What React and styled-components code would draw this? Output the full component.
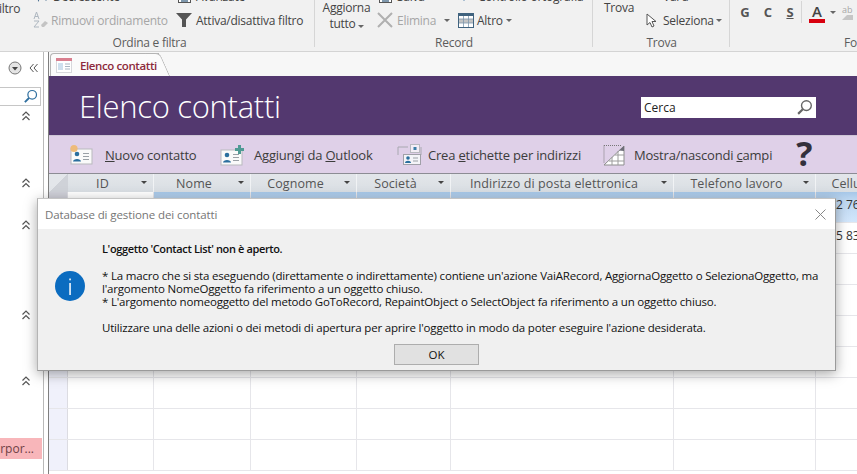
import styled, { createGlobalStyle } from "styled-components";

const Global = createGlobalStyle`
  html, body { margin: 0; padding: 0; background: #fff; }
  body { font-family: "Open Sans", "Liberation Sans", sans-serif; }
`;

const Page = styled.div`
  position: relative;
  width: 857px;
  height: 474px;
  overflow: hidden;
  display: flex;
  flex-direction: column;
  background: #fff;
`;

/* ribbon */
const Ribbon = styled.div`
  display: flex;
  flex: none;
  height: 51px;
  background: #f1f1f1;
  border-bottom: 1px solid #d4d4d4;
  overflow: hidden;
  color: #444;
  font-size: 12px;
  letter-spacing: -0.25px;
  white-space: nowrap;
`;

const Group = styled.div`
  flex: none;
  box-sizing: border-box;
  width: ${(p) => p.$w}px;
  display: grid;
  grid-template-columns: minmax(0, 1fr);
  grid-template-rows: 34px 17px;
  position: relative;
  &::after {
    content: "";
    position: absolute;
    right: 0;
    top: 0;
    bottom: 4px;
    width: 1px;
    background: ${(p) => (p.$last ? "transparent" : "#d6d6d6")};
  }
`;

const GroupBody = styled.div`
  display: flex;
  height: 34px;
  min-width: 0;
  padding: ${(p) => p.$pad || "0"};
`;

const GroupLabel = styled.div`
  line-height: 17px;
  color: #5c5c5c;
  text-align: ${(p) => (p.$left ? "left" : "center")};
  padding-left: ${(p) => p.$left || 0}px;
  padding-right: ${(p) => p.$right || 0}px;
`;

const BigButton = styled.div`
  flex: none;
  width: ${(p) => p.$w}px;
  margin-left: ${(p) => p.$ml || 0}px;
  margin-top: ${(p) => p.$top || 0}px;
  line-height: 16px;
  text-align: ${(p) => p.$align || "center"};
`;

const SmallCol = styled.div`
  flex: none;
  width: ${(p) => p.$w}px;
  margin-left: ${(p) => p.$ml || 0}px;
  height: 31px;
  display: flex;
  flex-direction: column;
  justify-content: flex-end;
  gap: 2px;
`;

const SmallBtn = styled.div`
  flex: none;
  height: 22px;
  display: flex;
  align-items: center;
  gap: ${(p) => p.$gap ?? 4}px;
  color: ${(p) => (p.$off ? "#a6a6a6" : "#444")};
`;

const Caret = styled.span`
  display: inline-block;
  width: 0;
  height: 0;
  border-left: 3px solid transparent;
  border-right: 3px solid transparent;
  border-top: 3px solid #666;
  margin-left: ${(p) => p.$ml ?? 2}px;
  margin-top: 1px;
`;

const FontTools = styled.div`
  display: flex;
  align-items: center;
  height: 24px;
  letter-spacing: 0;
  padding-left: 9px;
`;

const FontLetter = styled.span`
  width: ${(p) => p.$w}px;
  text-align: center;
  font-weight: 700;
  font-size: 13px;
  color: #555;
  text-decoration: ${(p) => (p.$under ? "underline" : "none")};
`;

const ToolDivider = styled.span`
  width: 1px;
  height: 22px;
  background: #d6d6d6;
  margin: 0 7px 0 6px;
`;

const ColorA = styled.span`
  width: 16px;
  height: 21px;
  box-sizing: border-box;
  font-weight: 600;
  font-size: 15px;
  line-height: 18px;
  text-align: center;
  color: #444;
  border-bottom: 4px solid #d8000f;
`;

const Highlight = styled.span`
  margin-left: 6px;
  display: flex;
  flex-direction: column;
  font-size: 9px;
  line-height: 9px;
  color: #a8a8a8;
`;

/* body */
const Workspace = styled.div`
  flex: 1;
  display: flex;
  min-height: 0;
`;

const NavPane = styled.div`
  flex: none;
  box-sizing: border-box;
  width: 44px;
  border-right: 1px solid #b9b9b9;
  display: flex;
  flex-direction: column;
`;

const NavTop = styled.div`
  height: 35px;
  box-sizing: border-box;
  padding: 0 5px 3px 0;
  display: flex;
  justify-content: flex-end;
  align-items: center;
  gap: 7px;
`;

const NavSearch = styled.div`
  height: 19px;
  width: 41px;
  box-sizing: border-box;
  border: 1px solid #c6c6c6;
  border-left: none;
  display: flex;
  justify-content: flex-end;
  align-items: center;
  padding-right: 2px;
`;

const NavSection = styled.div`
  flex: none;
  height: ${(p) => p.$h}px;
  box-sizing: border-box;
  padding: 5px 0 0 21px;
`;

const NavItem = styled.div`
  width: 42px;
  height: 21px;
  background: #f8b6ba;
  color: #6e4044;
  font-size: 12px;
  line-height: 21px;
  display: flex;
  justify-content: flex-end;
  padding-right: 8px;
  box-sizing: border-box;
  white-space: nowrap;
  overflow: hidden;
`;

const Main = styled.div`
  flex: 1;
  min-width: 0;
  margin-left: 4px;
  border-left: 1px solid #7f7f7f;
  display: flex;
  flex-direction: column;
`;

const TabStrip = styled.div`
  flex: none;
  height: 24px;
  background: #f7f7f7;
  display: flex;
  align-items: flex-end;
`;

const Tab = styled.div`
  position: relative;
  width: 109px;
  height: 23px;
  margin-left: 1px;
  box-sizing: border-box;
  display: flex;
  align-items: center;
  gap: 8px;
  padding: 0 0 0 5px;
  background: #fbfbfb;
  border: 1px solid #b4b4b4;
  border-right: none;
  border-bottom: none;
  border-radius: 4px 0 0 0;
  font-size: 11.5px;
  font-weight: 600;
  letter-spacing: -0.4px;
  color: #8d2a3c;
  white-space: nowrap;
  &::after {
    content: "";
    position: absolute;
    right: -6px;
    top: -1px;
    bottom: 0;
    width: 14px;
    background: #fbfbfb;
    border-top: 1px solid #b4b4b4;
    border-right: 1px solid #b4b4b4;
    border-radius: 0 5px 0 0;
    transform: skewX(24deg);
  }
  & > * {
    position: relative;
    z-index: 1;
  }
`;

const Banner = styled.div`
  flex: none;
  height: 59px;
  background: #53386f;
  border-bottom: 1px solid #cdc5d5;
  display: flex;
  align-items: center;
  justify-content: space-between;
  padding: 0 41px 0 30px;
`;

const BannerTitle = styled.h1`
  margin: 0;
  font-size: 31px;
  font-weight: 300;
  letter-spacing: -0.3px;
  color: #fff;
`;

const SearchBox = styled.div`
  width: 175px;
  height: 21px;
  margin-top: 3px;
  box-sizing: border-box;
  background: #fff;
  padding: 0 3px;
  display: flex;
  align-items: center;
  justify-content: space-between;
  font-size: 12px;
  color: #222;
`;

const ActionBar = styled.div`
  flex: none;
  height: 37px;
  background: #dfd0e8;
  border-bottom: 1px solid #8c8c94;
  display: flex;
  align-items: center;
  padding-left: 21px;
  font-size: 13px;
  letter-spacing: -0.2px;
  color: #3c3c3c;
  white-space: nowrap;
`;

const Action = styled.div`
  flex: none;
  width: ${(p) => p.$w}px;
  display: flex;
  align-items: center;
  gap: ${(p) => p.$gap}px;
`;

const Help = styled.span`
  font-size: 34px;
  font-weight: 700;
  line-height: 30px;
  color: #33303c;
  margin-left: 16px;
  margin-top: -3px;
`;

const HeadRow = styled.div`
  flex: none;
  height: 18px;
  display: flex;
  background: linear-gradient(#e3e6ea, #d9dee3);
  font-size: 12.5px;
  letter-spacing: 0.1px;
  color: #555;
  white-space: nowrap;
`;

const SelectCorner = styled.div`
  flex: none;
  width: 19px;
  background: linear-gradient(135deg, #e3e6ea 50%, #cfd2d8 50%);
`;

const HeadCell = styled.div`
  flex: none;
  width: ${(p) => p.$w}px;
  box-sizing: border-box;
  border-right: 1px solid #f1f3f5;
  display: flex;
  align-items: center;
  justify-content: center;
  position: relative;
  padding: 1px 16px 0 0;
`;

const HeadCaret = styled(Caret)`
  position: absolute;
  right: 6px;
  top: 7px;
  margin: 0;
  border-top-color: #444;
`;

const Row = styled.div`
  flex: none;
  height: 31px;
  box-sizing: border-box;
  display: flex;
  border-bottom: 1px solid #e6e6ea;
  background: ${(p) => (p.$selected ? "linear-gradient(#a6c7e8, #bcd6f0 25%, #d2e6fb)" : "#fff")};
`;

const Selector = styled.div`
  flex: none;
  width: 19px;
  box-sizing: border-box;
  background: ${(p) => (p.$selected ? "#cfd0d8" : "#f0f1fb")};
  border-right: 1px solid #dcdce2;
`;

const Cell = styled.div`
  flex: none;
  width: ${(p) => p.$w}px;
  box-sizing: border-box;
  border-right: 1px solid #e6e6ea;
  padding: 6px 0 0 20px;
  background: ${(p) => (p.$focus ? "#fff" : "transparent")};
  font-size: 12px;
  line-height: 14px;
  color: #333;
  white-space: nowrap;
  overflow: hidden;
`;

/* dialog */
const Dialog = styled.div`
  position: absolute;
  left: 37px;
  top: 198px;
  width: 799px;
  height: 173px;
  box-sizing: border-box;
  background: #f0f0f0;
  border: 1px solid #9a9a9a;
  border-top-color: #c4c4c4;
  border-left-color: #b4b4b4;
  box-shadow: 0 3px 12px rgba(0, 0, 0, 0.35);
  display: flex;
  flex-direction: column;
`;

const DialogTitle = styled.div`
  flex: none;
  height: 30px;
  background: #fff;
  padding: 0 9px 0 7px;
  display: flex;
  align-items: center;
  justify-content: space-between;
  font-size: 11.5px;
  letter-spacing: -0.1px;
  color: #767676;
`;

const DialogBody = styled.div`
  flex: 1;
  display: flex;
  align-items: flex-start;
  padding: 12px 0 0 17px;
  gap: 17px;
`;

const InfoIcon = styled.div`
  flex: none;
  margin-top: 30px;
`;

const Message = styled.div`
  font-size: 11.5px;
  line-height: 13px;
  letter-spacing: -0.19px;
  color: #111;
  white-space: nowrap;
`;

const MessageHead = styled.div`
  font-size: 11px;
  letter-spacing: -0.37px;
  font-weight: 600;
  margin-bottom: 14px;
  margin-top: 1px;
`;

const MessagePara = styled.div`
  margin-top: ${(p) => p.$top || 0}px;
`;

const DialogFoot = styled.div`
  flex: none;
  height: 26px;
  display: flex;
  justify-content: center;
`;

const OkButton = styled.button`
  width: 85px;
  height: 21px;
  padding: 0;
  background: #e1e1e1;
  border: 1px solid #adadad;
  font-family: inherit;
  font-size: 11.5px;
  color: #111;
`;

const Icon = styled.svg`
  flex: none;
  display: block;
`;

const ChevronUp = () => (
  <Icon width="10" height="10" viewBox="0 0 10 10" fill="none" stroke="#555" strokeWidth="1.2">
    <path d="M1.5 4.5 5 1l3.5 3.5M1.5 9 5 5.5 8.5 9" />
  </Icon>
);

const Magnifier = ({ color = "#666", size = 16 }) => (
  <Icon width={size} height={size} viewBox="0 0 16 16" fill="none" stroke={color}>
    <circle cx="9.8" cy="6.2" r="4.6" strokeWidth="1.3" />
    <path d="M6.4 9.6 2 14" strokeWidth="2" />
  </Icon>
);

const Card = ({ x = 1, y = 5, w = 21, h = 15 }) => (
  <g>
    <rect x={x} y={y} width={w} height={h} fill="#fafafa" stroke="#b9b9bd" />
    <circle cx={x + 6} cy={y + 5} r="2.3" fill="#2a6f9e" />
    <path d={`M${x + 2} ${y + 12.5}c0-3.5 8-3.5 8 0z`} fill="#2a6f9e" />
    <path d={`M${x + 12} ${y + 4.5}h6M${x + 12} ${y + 7.5}h6M${x + 12} ${y + 10.5}h6`} stroke="#9aa0a6" />
  </g>
);

const NewContactIcon = () => (
  <Icon width="24" height="22" viewBox="0 0 24 22">
    <Card />
    <circle cx="4" cy="4.5" r="3.6" fill="#eebb7a" />
  </Icon>
);

const OutlookIcon = () => (
  <Icon width="24" height="22" viewBox="0 0 24 22">
    <Card y={6} />
    <path d="M15 4h3V1h3v3h3v3h-3v3h-3V7h-3z" fill="#4f9a94" />
  </Icon>
);

const LabelsIcon = () => (
  <Icon width="25" height="23" viewBox="0 0 25 23">
    <path d="M1 12V4h10M24 4v8" fill="none" stroke="#a8a8b0" />
    <rect x="13.5" y="1.5" width="9" height="8" fill="#f4eef6" stroke="#b9b9c0" />
    <rect x="16.5" y="4" width="3" height="3" fill="#3a7da8" />
    <rect x="6.5" y="11.5" width="17" height="10" fill="#f4f4f8" stroke="#a0a0a8" />
    <circle cx="11" cy="15" r="1.8" fill="#2a6f9e" />
    <path d="M8 20c0-3 6-3 6 0z" fill="#2a6f9e" />
    <path d="M16 15h5M16 18h5" stroke="#9aa0a6" />
  </Icon>
);

const FieldsIcon = () => (
  <Icon width="23" height="22" viewBox="0 0 23 22">
    <path d="M1 21 21 2v19z" fill="#fff" stroke="#8d8d8d" />
    <path d="M1 1.5h17M1 1.5v17" stroke="#777" strokeDasharray="1 1" fill="none" />
    <path d="M9 21V13M15 21V7M6 17h15M12 11h9" stroke="#9c9c9c" fill="none" />
    <path d="M16 6.5 21 2v5z" fill="#6d6d78" />
  </Icon>
);

const TabIcon = () => (
  <Icon width="16" height="15" viewBox="0 0 16 15">
    <rect x="0.5" y="0.5" width="15" height="14" fill="#fff" stroke="#d8d8dc" />
    <rect x="0" y="0" width="16" height="3" fill="#d97f8f" />
    <rect x="2" y="5" width="5" height="7" fill="#cfe0ee" />
    <path d="M9 6h5M9 8.5h5M9 11h5" stroke="#a9b6c2" />
  </Icon>
);

const SortIcon = () => (
  <Icon width="16" height="18" viewBox="0 0 16 18">
    <path d="M1 8l2.5-7L6 8M2 5.5h3M1 10h5l-5 6h5" fill="none" stroke="#aeb7c0" />
    <path d="m8 14 4-4 3 2-4 4H9z" fill="#c4c4c4" />
  </Icon>
);

const FunnelIcon = () => (
  <Icon width="16" height="16" viewBox="0 0 16 16">
    <path d="M0 1h16l-6 6.5V15H6V7.5z" fill="#555" />
  </Icon>
);

const CrossIcon = () => (
  <Icon width="16" height="16" viewBox="0 0 16 16" stroke="#b0b0b0" strokeWidth="2">
    <path d="m1 1 14 14M15 1 1 15" />
  </Icon>
);

const MoreIcon = () => (
  <Icon width="16" height="15" viewBox="0 0 16 15">
    <rect x="0.5" y="0.5" width="15" height="14" fill="#fff" stroke="#40637f" />
    <rect x="0" y="0" width="16" height="3" fill="#40637f" />
    <rect x="1" y="6" width="14" height="4" fill="#c4c4c4" />
    <path d="M5.5 3v11M10.5 3v11M1 6h14M1 10h14" stroke="#7f98ad" strokeWidth="0.8" />
  </Icon>
);

const CursorIcon = () => (
  <Icon width="11" height="15" viewBox="0 0 11 15">
    <path d="M1 1v11l3-2.5 2 4.5 2-1-2-4.5h4z" fill="#fff" stroke="#555" />
  </Icon>
);

const GoIcon = () => (
  <Icon width="11" height="15" viewBox="0 0 11 15">
    <path d="M1 6h6V3l4 4-4 4V8H1z" fill="#8fb8d8" />
  </Icon>
);

const SaveIcon = () => (
  <Icon width="16" height="13" viewBox="0 0 16 13">
    <rect x="2.5" y="0.5" width="12" height="12" fill="#fff" stroke="#555" />
    <rect x="5" y="8" width="7" height="4" fill="#7f98ad" />
  </Icon>
);

const SpellIcon = () => (
  <Icon width="16" height="16" viewBox="0 0 16 16">
    <path d="M1 7h10l-5 6z" fill="#4a7ba6" />
  </Icon>
);

const AZIcon = () => (
  <Icon width="16" height="14" viewBox="0 0 16 14">
    <path d="M3 6h5l-2.5 7zM10 8h6l-3 4z" fill="#4a6f90" />
  </Icon>
);

const PencilIcon = () => (
  <Icon width="11" height="6" viewBox="0 0 11 6">
    <path d="m0 6 5-5h6v5z" fill="#c6c6c6" />
  </Icon>
);

const columns = [
  { name: "ID", w: 86 },
  { name: "Nome", w: 97 },
  { name: "Cognome", w: 106 },
  { name: "Società", w: 94 },
  { name: "Indirizzo di posta elettronica", w: 223 },
  { name: "Telefono lavoro", w: 142 },
  { name: "Cellulare", w: 100 },
];

const rowsData = [
  { phone: "2 76", selected: true },
  { phone: "5 83" },
  {}, {}, {}, {}, {}, {}, {},
];

export default function App() {
  return (
    <Page>
      <Global />
      <Ribbon>
        <Group $w={315}>
          <GroupBody>
            <BigButton $w={27} $ml={-7} $top={1} $align="right">Filtro</BigButton>
            <SmallCol $w={143} $ml={13}>
              <SmallBtn><AZIcon />Decrescente</SmallBtn>
              <SmallBtn $off $gap={2}><SortIcon />Rimuovi ordinamento</SmallBtn>
            </SmallCol>
            <SmallCol $w={128}>
              <SmallBtn><SaveIcon />Avanzate</SmallBtn>
              <SmallBtn><FunnelIcon />Attiva/disattiva filtro</SmallBtn>
            </SmallCol>
          </GroupBody>
          <GroupLabel $right={16}>Ordina e filtra</GroupLabel>
        </Group>
        <Group $w={278}>
          <GroupBody $pad="0 0 0 7px">
            <BigButton $w={49}>Aggiorna<br />tutto<Caret /></BigButton>
            <SmallCol $w={81} $ml={6}>
              <SmallBtn><SaveIcon />Salva</SmallBtn>
              <SmallBtn $off><CrossIcon />Elimina<Caret $ml={4} /></SmallBtn>
            </SmallCol>
            <SmallCol $w={130}>
              <SmallBtn><SpellIcon />Controllo ortografia</SmallBtn>
              <SmallBtn $gap={3}><MoreIcon />Altro<Caret $ml={0} /></SmallBtn>
            </SmallCol>
          </GroupBody>
          <GroupLabel>Record</GroupLabel>
        </Group>
        <Group $w={137}>
          <GroupBody $pad="0 0 0 11px">
            <BigButton $w={30} $align="left">Trova</BigButton>
            <SmallCol $w={90} $ml={12}>
              <SmallBtn $gap={6}><GoIcon />Vai a</SmallBtn>
              <SmallBtn $gap={6}><CursorIcon />Seleziona<Caret $ml={-4} /></SmallBtn>
            </SmallCol>
          </GroupBody>
          <GroupLabel>Trova</GroupLabel>
        </Group>
        <Group $w={127} $last>
          <FontTools>
            <FontLetter $w={12}>G</FontLetter>
            <FontLetter $w={34}>C</FontLetter>
            <FontLetter $w={10} $under>S</FontLetter>
            <ToolDivider />
            <ColorA>A</ColorA>
            <Caret $ml={5} />
            <Highlight>ab<PencilIcon /></Highlight>
          </FontTools>
          <GroupLabel $left={114}>Formattazione testo</GroupLabel>
        </Group>
      </Ribbon>

      <Workspace>
        <NavPane>
          <NavTop>
            <Icon width="14" height="14" viewBox="0 0 14 14">
              <circle cx="7" cy="7" r="6" fill="#e4e4e4" stroke="#777" />
              <path d="M4 6h6L7 9.5z" fill="#444" />
            </Icon>
            <Icon width="9" height="10" viewBox="0 0 9 10" fill="none" stroke="#555">
              <path d="M4.5 1 1 5l3.5 4M8.5 1 5 5l3.5 4" />
            </Icon>
          </NavTop>
          <NavSearch><Magnifier color="#2f6f9f" size={15} /></NavSearch>
          <NavSection $h={67}><ChevronUp /></NavSection>
          <NavSection $h={42}><ChevronUp /></NavSection>
          <NavSection $h={90}><ChevronUp /></NavSection>
          <NavSection $h={66}><ChevronUp /></NavSection>
          <NavSection $h={67}><ChevronUp /></NavSection>
          <NavItem>orpor...</NavItem>
        </NavPane>

        <Main>
          <TabStrip>
            <Tab><TabIcon /><span>Elenco contatti</span></Tab>
          </TabStrip>
          <Banner>
            <BannerTitle>Elenco contatti</BannerTitle>
            <SearchBox>Cerca<Magnifier size={17} /></SearchBox>
          </Banner>
          <ActionBar>
            <Action $w={150} $gap={11}><NewContactIcon /><span><u>N</u>uovo contatto</span></Action>
            <Action $w={177} $gap={10}><OutlookIcon /><span>Aggiungi da <u>O</u>utlook</span></Action>
            <Action $w={206} $gap={6}><LabelsIcon /><span>Crea <u>e</u>tichette per indirizzi</span></Action>
            <Action $w={170} $gap={8}>
              <FieldsIcon /><span>Mostra/nascondi <u>c</u>ampi</span>
              <Help>?</Help>
            </Action>
          </ActionBar>
          <HeadRow>
            <SelectCorner />
            {columns.map((c) => (
              <HeadCell key={c.name} $w={c.w}>
                {c.name}
                <HeadCaret />
              </HeadCell>
            ))}
          </HeadRow>
          {rowsData.map((r, i) => (
            <Row key={i} $selected={r.selected}>
              <Selector $selected={r.selected} />
              {columns.map((c, j) => (
                <Cell key={c.name} $w={c.w} $focus={r.selected && j === 0}>
                  {j === 6 ? r.phone : null}
                </Cell>
              ))}
            </Row>
          ))}
        </Main>
      </Workspace>

      <Dialog>
        <DialogTitle>
          Database di gestione dei contatti
          <Icon width="11" height="11" viewBox="0 0 11 11" stroke="#888">
            <path d="m.5.5 10 10M10.5.5l-10 10" />
          </Icon>
        </DialogTitle>
        <DialogBody>
          <InfoIcon>
            <Icon width="30" height="30" viewBox="0 0 30 30">
              <circle cx="15" cy="15" r="15" fill="#0b6cc0" />
              <rect x="14.3" y="12" width="1.5" height="12" fill="#fff" />
              <rect x="14.3" y="7.5" width="1.5" height="1.8" fill="#fff" />
            </Icon>
          </InfoIcon>
          <Message>
            <MessageHead>L'oggetto 'Contact List' non è aperto.</MessageHead>
            <MessagePara>
              * La macro che si sta eseguendo (direttamente o indirettamente) contiene un'azione VaiARecord, AggiornaOggetto o SelezionaOggetto, ma<br />
              l'argomento NomeOggetto fa riferimento a un oggetto chiuso.<br />
              * L'argomento nomeoggetto del metodo GoToRecord, RepaintObject o SelectObject fa riferimento a un oggetto chiuso.
            </MessagePara>
            <MessagePara $top={13}>
              Utilizzare una delle azioni o dei metodi di apertura per aprire l'oggetto in modo da poter eseguire l'azione desiderata.
            </MessagePara>
          </Message>
        </DialogBody>
        <DialogFoot>
          <OkButton>OK</OkButton>
        </DialogFoot>
      </Dialog>
    </Page>
  );
}
